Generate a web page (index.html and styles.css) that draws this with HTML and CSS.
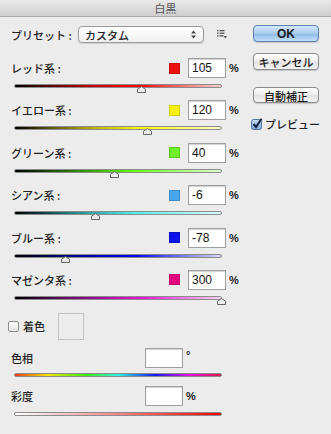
FILE: index.html
```html
<!DOCTYPE html>
<html lang="ja">
<head>
    <meta charset="UTF-8">
    <meta name="viewport" content="width=device-width, initial-scale=1.0">
    <title>白黒</title>
    <link rel="stylesheet" href="styles.css">
</head>
<body>
    <div class="titlebar">白黒</div>

    <div class="dialog">
        <div class="left">
            <div class="preset-row">
                <span class="preset-label">プリセット :</span>
                <div class="select">
                    <span>カスタム</span>
                    <svg class="select-arrows" width="5" height="9" viewBox="0 0 5 9">
                        <path d="M0 3.5 L2.5 0.5 L5 3.5 Z M0 5.5 L2.5 8.5 L5 5.5 Z" fill="#444"/>
                    </svg>
                </div>
                <svg class="preset-menu" width="10" height="9" viewBox="0 0 10 9">
                    <rect x="0" y="0" width="1.5" height="1.3" fill="#555"/>
                    <rect x="2.5" y="0" width="5" height="1.3" fill="#555"/>
                    <rect x="0" y="2.6" width="1.5" height="1.3" fill="#555"/>
                    <rect x="2.5" y="2.6" width="5" height="1.3" fill="#555"/>
                    <rect x="0" y="5.2" width="1.5" height="1.3" fill="#555"/>
                    <rect x="2.5" y="5.2" width="4" height="1.3" fill="#555"/>
                    <path d="M6.5 6 L10 6 L8.25 8.5 Z" fill="#555"/>
                </svg>
            </div>

            <div class="channels">
                <div class="channel">
                    <div class="ch-head">
                        <span class="ch-label">レッド系 :</span>
                        <span class="swatch" style="background:#ee1111"></span>
                        <span class="num">105</span>
                        <span class="unit">%</span>
                    </div>
                    <div class="track red"><span class="thumb" style="left:61%"></span></div>
                </div>
                <div class="channel">
                    <div class="ch-head">
                        <span class="ch-label">イエロー系 :</span>
                        <span class="swatch" style="background:#f6f20e"></span>
                        <span class="num">120</span>
                        <span class="unit">%</span>
                    </div>
                    <div class="track yellow"><span class="thumb" style="left:64%"></span></div>
                </div>
                <div class="channel">
                    <div class="ch-head">
                        <span class="ch-label">グリーン系 :</span>
                        <span class="swatch" style="background:#6ef02a"></span>
                        <span class="num">40</span>
                        <span class="unit">%</span>
                    </div>
                    <div class="track green"><span class="thumb" style="left:48%"></span></div>
                </div>
                <div class="channel">
                    <div class="ch-head">
                        <span class="ch-label">シアン系 :</span>
                        <span class="swatch" style="background:#4aa6ec"></span>
                        <span class="num">-6</span>
                        <span class="unit">%</span>
                    </div>
                    <div class="track cyan"><span class="thumb" style="left:38.8%"></span></div>
                </div>
                <div class="channel">
                    <div class="ch-head">
                        <span class="ch-label">ブルー系 :</span>
                        <span class="swatch" style="background:#0a12e8"></span>
                        <span class="num">-78</span>
                        <span class="unit">%</span>
                    </div>
                    <div class="track blue"><span class="thumb" style="left:24.4%"></span></div>
                </div>
                <div class="channel">
                    <div class="ch-head">
                        <span class="ch-label">マゼンタ系 :</span>
                        <span class="swatch" style="background:#e4087c"></span>
                        <span class="num">300</span>
                        <span class="unit">%</span>
                    </div>
                    <div class="track magenta"><span class="thumb" style="left:100%"></span></div>
                </div>
            </div>

            <div class="tint-row">
                <span class="checkbox"></span>
                <span class="tint-label">着色</span>
                <span class="tint-box"></span>
            </div>

            <div class="plain-head hue-head">
                <span class="plain-label">色相</span>
                <span class="num"></span>
                <span class="unit deg">°</span>
            </div>
            <div class="track hue"></div>

            <div class="plain-head sat-head">
                <span class="plain-label">彩度</span>
                <span class="num"></span>
                <span class="unit">%</span>
            </div>
            <div class="track sat"></div>
        </div>

        <div class="right">
            <button class="btn btn-ok">OK</button>
            <button class="btn btn-cancel">キャンセル</button>
            <button class="btn btn-auto">自動補正</button>
            <div class="preview-row">
                <svg class="check-on" width="12" height="12" viewBox="0 0 12 12">
                    <defs>
                        <linearGradient id="cb" x1="0" y1="0" x2="0" y2="1">
                            <stop offset="0" stop-color="#c9dcf2"/>
                            <stop offset="1" stop-color="#7fa7d8"/>
                        </linearGradient>
                    </defs>
                    <rect x="0.5" y="1.5" width="10" height="10" rx="2" fill="url(#cb)" stroke="#52739d"/>
                    <path d="M2.5 6 L5 9 L10.5 0.8" fill="none" stroke="#14213d" stroke-width="2"/>
                </svg>
                <span>プレビュー</span>
            </div>
        </div>
    </div>
</body>
</html>
```

FILE: styles.css
```css
body {
    margin: 0;
    background-color: #ececec;
    font-family: "Liberation Sans", "Noto Sans CJK JP", sans-serif;
    color: #222;
    font-size: 11px;
}

.titlebar {
    height: 16px;
    line-height: 17px;
    text-align: center;
    font-family: "Noto Sans CJK JP", sans-serif;
    font-size: 11px;
    color: #555;
    background: linear-gradient(#e9e9e9, #cfcfcf);
    border-bottom: 1px solid #a9a9a9;
}

.dialog {
    display: flex;
}

.left {
    width: 229px;
    padding: 9px 0 0 11px;
}

.right {
    display: flex;
    flex-direction: column;
    align-items: flex-start;
    padding: 8px 0 0 13px;
}

/* preset */
.preset-row {
    display: flex;
    align-items: center;
    height: 17px;
}

.preset-label {
    width: 67px;
    font-weight: 500;
    font-family: "Noto Sans CJK JP", sans-serif;
}

.select {
    height: 15px;
    border: 1px solid #9a9a9a;
    border-radius: 4px;
    background: linear-gradient(#ffffff, #f1f1f1);
    display: flex;
    align-items: center;
    justify-content: space-between;
    padding: 0 7px 0 6px;
    box-sizing: content-box;
    width: 111px;
    font-weight: 500;
    font-family: "Noto Sans CJK JP", sans-serif;
    box-shadow: 0 1px 1px rgba(0, 0, 0, 0.12);
}

.preset-menu {
    margin-left: 13px;
}

/* channels */
.channels {
    margin-top: 14px;
}

.channel {
    height: 42.4px;
}

.ch-head,
.plain-head {
    display: flex;
    align-items: center;
    height: 22px;
}

.ch-label {
    flex: 1;
    font-weight: 500;
    font-family: "Noto Sans CJK JP", sans-serif;
}

.swatch {
    width: 9px;
    height: 9px;
    border: 1px solid rgba(0, 0, 0, 0.15);
    margin-right: 8px;
}

.num {
    width: 33px;
    height: 18px;
    line-height: 18px;
    padding-left: 3px;
    background: #fff;
    border: 1px solid #a0a0a0;
    box-shadow: inset 0 1px 1px rgba(0, 0, 0, 0.18);
    font-size: 12px;
    color: #111;
}

.unit {
    width: 11px;
    margin-left: 3px;
    font-weight: bold;
    font-size: 11px;
}

.deg {
    align-self: flex-start;
    margin-top: 2px;
}

.track {
    position: relative;
    width: 206px;
    height: 2px;
    margin: 5px 0 0 3px;
    border: 1px solid #8c8c8c;
    border-radius: 2px;
}

.red { background: linear-gradient(to right, #000 0%, #c00 38%, #f00 60%, #f8d4d4 100%); }
.yellow { background: linear-gradient(to right, #000 0%, #bdb200 38%, #ffff00 62%, #fbf8d0 100%); }
.green { background: linear-gradient(to right, #000 0%, #3da800 38%, #66ff11 58%, #e1fbd6 100%); }
.cyan { background: linear-gradient(to right, #000 0%, #2aa6a6 36%, #4cf0ee 58%, #dcf8f8 100%); }
.blue { background: linear-gradient(to right, #000 0%, #0000b0 36%, #0000ff 58%, #d7d9fb 100%); }
.magenta { background: linear-gradient(to right, #000 0%, #8c0b88 35%, #ee11dd 62%, #f2d7ef 100%); }

.hue {
    margin-top: 4px;
    background: linear-gradient(to right, #f03a10 0%, #f6e600 16%, #3ef000 34%, #30f0e8 50%, #1018f0 68%, #e010e8 84%, #e8104a 100%);
}

.sat {
    background: linear-gradient(to right, #ffffff 0%, #f6a0a0 40%, #f00000 100%);
}

.thumb {
    position: absolute;
    top: 1px;
    width: 9px;
    height: 7px;
    margin-left: -4px;
    background: url("data:image/svg+xml,%3Csvg xmlns='http://www.w3.org/2000/svg' width='9' height='7'%3E%3Cpath d='M0.5 6.5 L0.5 3.2 L4.5 0.6 L8.5 3.2 L8.5 6.5 Z' fill='%23ececec' stroke='%23666'/%3E%3C/svg%3E") no-repeat;
}

/* tint */
.tint-row {
    display: flex;
    align-items: center;
    height: 28px;
    margin-top: 1px;
}

.checkbox {
    width: 9px;
    height: 9px;
    margin-left: -3px;
    border: 1px solid #8e8e8e;
    border-radius: 2px;
    background: linear-gradient(#ffffff, #e4e4e4);
}

.tint-label {
    margin-left: 4px;
    width: 35px;
    font-weight: 500;
    font-family: "Noto Sans CJK JP", sans-serif;
}

.tint-box {
    width: 24px;
    height: 25px;
    border: 1px solid #c4c4c4;
}

.plain-label {
    width: 134px;
    font-weight: 500;
    font-family: "Noto Sans CJK JP", sans-serif;
}

.hue-head {
    margin-top: 7px;
}

.sat-head {
    margin-top: 8px;
}

/* buttons */
.btn {
    width: 66px;
    height: 17px;
    padding: 0;
    border: 1px solid #8b8b8b;
    border-radius: 4px;
    background: linear-gradient(#ffffff, #ececec 50%, #e0e0e0 51%, #f4f4f4);
    font-family: "Liberation Sans", "Noto Sans CJK JP", sans-serif;
    font-size: 11px;
    font-weight: 500;
    color: #1a1a1a;
    box-shadow: 0 1px 1px rgba(0, 0, 0, 0.15);
}

.btn-ok {
    border-color: #5b7eab;
    background: linear-gradient(#d4e6fa, #a9cbef 50%, #8dbaea 51%, #c2defa);
    font-size: 12px;
    font-weight: bold;
}

.btn-cancel {
    margin-top: 11px;
}

.btn-auto {
    margin-top: 17px;
    height: 16px;
}

.preview-row {
    display: flex;
    align-items: center;
    margin: 13px 0 0 -2px;
    height: 16px;
    font-weight: 500;
    font-family: "Noto Sans CJK JP", sans-serif;
}

.preview-row span {
    margin-left: 2px;
}
```
